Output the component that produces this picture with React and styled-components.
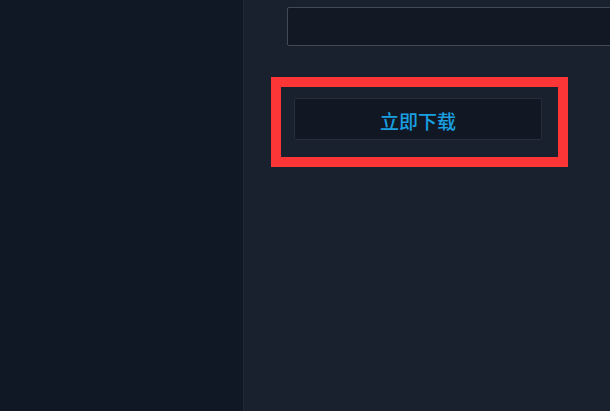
import React from "react";
import styled, { createGlobalStyle } from "styled-components";

const Global = createGlobalStyle`
  html, body { margin: 0; padding: 0; background: #111825; }
  body { font-family: "Noto Sans CJK SC", "Noto Sans", sans-serif; }
`;

const Page = styled.div`
  display: flex;
  width: 610px;
  height: 411px;
  overflow: hidden;
`;

const Sidebar = styled.aside`
  flex: 0 0 243px;
  background: #111825;
  border-right: 1px solid #1f2835;
`;

const Main = styled.main`
  flex: 1;
  background: #1a212e;
  padding: 7px 0 0 27px;
  display: flex;
  flex-direction: column;
  align-items: flex-start;
  overflow: hidden;
`;

const Field = styled.div`
  margin-left: 16px;
  width: 360px;
  height: 39px;
  box-sizing: border-box;
  border: 1px solid #414957;
  border-radius: 2px;
  background: #121824;
  flex-shrink: 0;
`;

const Highlight = styled.div`
  margin-top: 31px;
  width: 297px;
  height: 90px;
  box-sizing: border-box;
  border: 10px solid #fc3636;
  padding: 11px 16px 0 13px;
`;

const DownloadButton = styled.button`
  width: 248px;
  height: 42px;
  box-sizing: border-box;
  border: 1px solid #262e3b;
  border-radius: 2px;
  background: #111824;
  color: #1a9fe0;
  font-family: "Noto Sans CJK SC", sans-serif;
  font-size: 19px;
  font-weight: 500;
  padding: 2px 0 0;
  display: flex;
  align-items: center;
  justify-content: center;
  cursor: pointer;
`;

export default function App() {
  return (
    <>
      <Global />
      <Page>
        <Sidebar />
        <Main>
          <Field />
          <Highlight>
            <DownloadButton>立即下载</DownloadButton>
          </Highlight>
        </Main>
      </Page>
    </>
  );
}
